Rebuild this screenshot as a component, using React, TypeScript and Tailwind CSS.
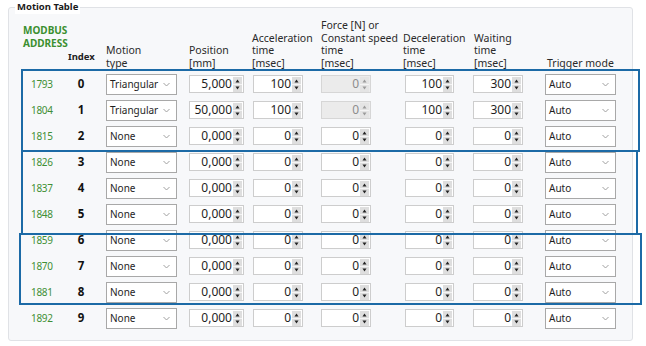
import React from 'react'

type Row = {
  addr: number
  motion: string
  pos: string
  accel: string
  force: string
  forceOff?: boolean
  decel: string
  wait: string
}

const ROWS: Row[] = [
  { addr: 1793, motion: 'Triangular', pos: '5,000', accel: '100', force: '0', forceOff: true, decel: '100', wait: '300' },
  { addr: 1804, motion: 'Triangular', pos: '50,000', accel: '100', force: '0', forceOff: true, decel: '100', wait: '300' },
  ...[1815, 1826, 1837, 1848, 1859, 1870, 1881, 1892].map((addr) => ({
    addr, motion: 'None', pos: '0,000', accel: '0', force: '0', decel: '0', wait: '0',
  })),
]

const cols = 'grid grid-cols-[38px_44px_83px_64px_68px_84px_68px_72px_72px]'

function Spinner({ off }: { off?: boolean }) {
  const c = off ? '#9a9a9a' : '#222'
  return (
    <svg width="9" height="15" viewBox="0 0 9 15" className="shrink-0 mr-[1px]">
      <rect x="0" y="0" width="9" height="15" fill={off ? '#e4e4e4' : '#dedede'} />
      <line x1="0" y1="7.5" x2="9" y2="7.5" stroke="#f4f4f4" strokeWidth="1" />
      <path d="M2.5 5.5 L4.5 2.5 L6.5 5.5 Z" fill={c} />
      <path d="M2.5 9.5 L4.5 12.5 L6.5 9.5 Z" fill={c} />
    </svg>
  )
}

function NumInput({ value, w, off }: { value: string; w: string; off?: boolean }) {
  return (
    <div
      className={`${w} h-[18px] flex items-center justify-end border ${
        off ? 'bg-[#ebebeb] border-[#d6d6d6] text-[#8d8d8d]' : 'bg-white border-[#cdcdcd] text-[#1e1e1e]'
      }`}
    >
      <span className="text-[12px] leading-none pr-[1px]">{value}</span>
      <Spinner off={off} />
    </div>
  )
}

function Select({ value }: { value: string }) {
  return (
    <div className="w-[71px] h-[21px] flex items-center justify-between border border-[#a8a8a8] bg-white pl-[3px] pr-[6px]">
      <span className="text-[10px] leading-none text-[#1e1e1e]">{value}</span>
      <svg width="7" height="5" viewBox="0 0 7 5">
        <polyline points="0.5,1 3.5,4 6.5,1" fill="none" stroke="#a0a0a0" strokeWidth="1" />
      </svg>
    </div>
  )
}

export default function App() {
  return (
    <div className="relative w-[646px] h-[346px] bg-white overflow-hidden font-['Noto_Sans',sans-serif] text-[#2a2a2a]">
      {/* panel */}
      <div className="relative ml-[8px] mt-[7px] w-[625px] h-[334px] border border-[#e0e2e6] rounded-[3px] bg-[#f7f8fa]">
        <div className="absolute -top-[8px] left-[6px] px-[2px] bg-white text-[9.5px] font-bold leading-[14px] text-[#1b1b1b]">
          Motion Table
        </div>

        <div className="pl-[15px] pt-[10px]">
          {/* header */}
          <div className={`${cols} h-[53px] items-end text-[10.5px] leading-[12.8px] pb-[1px]`}>
            <div className="self-start mt-[6px] text-[10px] font-bold leading-[13px] text-[#3b8f30] -ml-[1px] whitespace-nowrap">
              MODBUS
              <br />
              ADDRESS
            </div>
            <div className="pl-[6px] pb-[6px] text-[9.5px] font-bold text-[#222]">Index</div>
            <div>Motion<br />type</div>
            <div>Position<br />[mm]</div>
            <div className="-ml-[1px] whitespace-nowrap">Acceleration<br />time<br />[msec]</div>
            <div className="whitespace-nowrap">Force [N] or<br />Constant speed<br />time<br />[msec]</div>
            <div className="-ml-[2px] whitespace-nowrap">Deceleration<br />time<br />[msec]</div>
            <div className="ml-[1px]">Waiting<br />time<br />[msec]</div>
            <div className="ml-[2px] whitespace-nowrap">Trigger mode</div>
          </div>

          {/* rows */}
          {ROWS.map((r, i) => (
            <div key={r.addr} className={`${cols} h-[26px] items-center`}>
              <div className="pl-[7px] text-[10px] tracking-[-0.3px] text-[#3f8f35]">{r.addr}</div>
              <div className="text-center pr-[6px] text-[11.5px] font-bold text-[#111]">{i}</div>
              <Select value={r.motion} />
              <NumInput value={r.pos} w="w-[55px]" />
              <NumInput value={r.accel} w="w-[50px]" />
              <NumInput value={r.force} w="w-[50px]" off={r.forceOff} />
              <NumInput value={r.decel} w="w-[49px]" />
              <NumInput value={r.wait} w="w-[50px]" />
              <Select value="Auto" />
            </div>
          ))}
        </div>
      </div>

      {/* annotation frames */}
      <div className="absolute left-[21px] top-[69px] w-[619px] h-[83px] border-2 border-[#1c6aa6]" />
      <div className="absolute left-[21px] top-[150px] w-[617px] h-[85px] border-2 border-[#1c6aa6]" />
      <div className="absolute left-[19px] top-[233px] w-[623px] h-[72px] border-2 border-[#1c6aa6]" />
    </div>
  )
}
